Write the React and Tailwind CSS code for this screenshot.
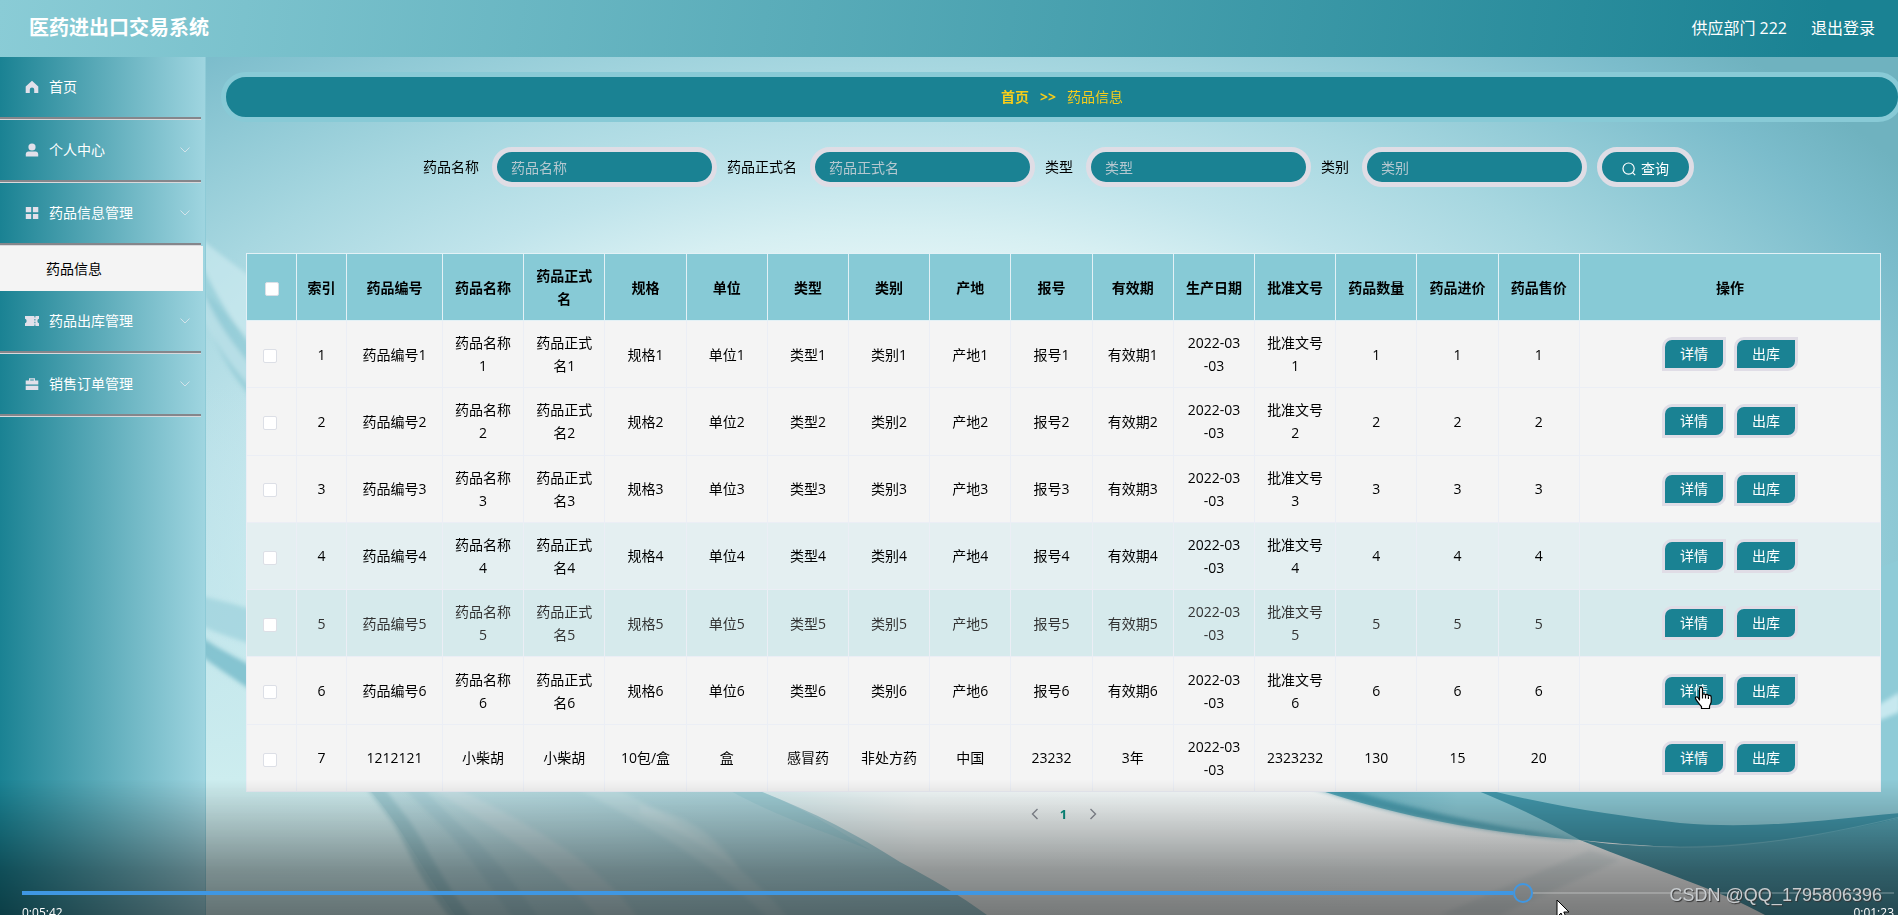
import { useState } from "react";
import clsx from "clsx";

const columns = [
  "药品编号",
  "药品名称",
  "药品正式名",
  "规格",
  "单位",
  "类型",
  "类别",
  "产地",
  "报号",
  "有效期",
  "生产日期",
  "批准文号",
  "药品数量",
  "药品进价",
  "药品售价",
];

const makeRow = (n) => [
  `药品编号${n}`,
  `药品名称${n}`,
  `药品正式名${n}`,
  `规格${n}`,
  `单位${n}`,
  `类型${n}`,
  `类别${n}`,
  `产地${n}`,
  `报号${n}`,
  `有效期${n}`,
  "2022-03\n-03",
  `批准文号${n}`,
  `${n}`,
  `${n}`,
  `${n}`,
];

const rows = [
  ...[1, 2, 3, 4, 5, 6].map(makeRow),
  [
    "1212121",
    "小柴胡",
    "小柴胡",
    "10包/盒",
    "盒",
    "感冒药",
    "非处方药",
    "中国",
    "23232",
    "3年",
    "2022-03\n-03",
    "2323232",
    "130",
    "15",
    "20",
  ],
];

const filters = ["药品名称", "药品正式名", "类型", "类别"];

const HomeIcon = () => (
  <svg width="14" height="14" viewBox="0 0 14 14" fill="currentColor">
    <path d="M7 .8 13.3 6.4V13H9.2V9.6a2.2 2.2 0 0 0-4.4 0V13H.7V6.4Z" />
  </svg>
);

const UserIcon = () => (
  <svg width="14" height="14" viewBox="0 0 14 14" fill="currentColor">
    <circle cx="7" cy="4" r="3.6" />
    <path d="M.8 13.5v-2.3c0-1.6 1.1-2.6 2.6-2.6h7.2c1.5 0 2.6 1 2.6 2.6v2.3Z" />
  </svg>
);

const GridIcon = () => (
  <svg width="14" height="14" viewBox="0 0 14 14" fill="currentColor">
    <path d="M.8 1h5.4v5.2H.8zM7.9 1h5.4v5.2H7.9zM.8 7.9h5.4v5.2H.8zM7.9 7.9h5.4v5.2H7.9z" />
  </svg>
);

const TicketIcon = () => (
  <svg width="14" height="14" viewBox="0 0 14 14" fill="currentColor">
    <path
      fillRule="evenodd"
      d="M0 2h9.4v1.6h1V2H14v2.8a2.3 2.3 0 0 0 0 4.4V12h-3.6v-1.6h-1V12H0V9.2a2.3 2.3 0 0 0 0-4.4ZM9.4 5v1.5h1V5Zm0 2.7v1.5h1V7.7Z"
    />
  </svg>
);

const BriefcaseIcon = () => (
  <svg width="14" height="14" viewBox="0 0 14 14" fill="currentColor">
    <path
      fillRule="evenodd"
      d="M4 3.6V1.2h6v2.4h3.3v4H.7v-4Zm1.2 0h3.6V2.4H5.2ZM.7 8.8h12.6V13H.7Z"
    />
  </svg>
);

const ChevronDown = () => (
  <svg
    width="12"
    height="12"
    viewBox="0 0 12 12"
    fill="none"
    stroke="currentColor"
    className="ml-auto text-[#d3e3ea]"
  >
    <path d="m1.5 3.5 4.5 4.5 4.5-4.5" />
  </svg>
);

const menu = [
  { label: "首页", icon: HomeIcon },
  { label: "个人中心", icon: UserIcon, expandable: true },
  { label: "药品信息管理", icon: GridIcon, expandable: true, children: ["药品信息"] },
  { label: "药品出库管理", icon: TicketIcon, expandable: true },
  { label: "销售订单管理", icon: BriefcaseIcon, expandable: true },
];

function Header() {
  return (
    <header className="h-[57px] pb-[2px] flex items-center justify-between pl-[29px] pr-[23px] text-white bg-[linear-gradient(98deg,#8accd6_0%,#1a8293_96%)]">
      <h1 className="text-xl font-bold">医药进出口交易系统</h1>
      <div className="flex items-center gap-6 text-base">
        <span>供应部门 222</span>
        <a href="#logout">退出登录</a>
      </div>
    </header>
  );
}

function Sidebar() {
  return (
    <aside className="w-[206px] shrink-0 border-r border-[#8ecbd7] bg-[linear-gradient(to_right,#1a8293,#9fd5e0)]">
      <nav>
        {menu.map(({ label, icon: Icon, expandable, children }) => (
          <div key={label}>
            <button
              type="button"
              className="w-[201px] h-[63px] pb-[3px] pl-[25px] pr-[10px] flex items-center text-left text-sm text-white shadow-[inset_0_-1px_0_#d9d9dc,inset_0_-3px_0_#85868b]"
            >
              <span className="w-6 text-[#e2e0ea]">
                <Icon />
              </span>
              {label}
              {expandable && <ChevronDown />}
            </button>
            {children?.map((child) => (
              <a
                key={child}
                href="#drug"
                className="w-[203px] h-[45px] pl-[46px] flex items-center text-sm text-black bg-[#f4f4f4]"
              >
                {child}
              </a>
            ))}
          </div>
        ))}
      </nav>
    </aside>
  );
}

function Backdrop() {
  return (
    <svg
      className="absolute inset-0 w-full h-full"
      viewBox="206 57 1692 858"
      preserveAspectRatio="none"
      aria-hidden="true"
    >
      <defs>
        <radialGradient
          id="glow"
          gradientUnits="userSpaceOnUse"
          cx="0"
          cy="0"
          r="1"
          gradientTransform="translate(900 560) scale(1210 704)"
        >
          <stop offset="0.36" stopColor="#ecf8f9" />
          <stop offset="0.47" stopColor="#d6eff2" />
          <stop offset="0.56" stopColor="#c0e4eb" />
          <stop offset="0.7" stopColor="#a7d7e0" />
          <stop offset="0.82" stopColor="#8fc9d5" />
          <stop offset="0.92" stopColor="#7bbccb" />
          <stop offset="1" stopColor="#6fb2bf" />
        </radialGradient>
        <linearGradient id="floor" x1="0" x2="1" y1="0" y2="0">
          <stop offset="0" stopColor="#cdedef" />
          <stop offset="0.3" stopColor="#d5eef1" />
          <stop offset="0.42" stopColor="#f4fbfb" />
          <stop offset="1" stopColor="#ffffff" />
        </linearGradient>
        <linearGradient id="haze" x1="0" x2="0" y1="0" y2="1">
          <stop offset="0" stopColor="#c3e6ed" stopOpacity="0" />
          <stop offset="1" stopColor="#cdedef" />
        </linearGradient>
        <linearGradient id="swath" x1="0" x2="1" y1="0" y2="0">
          <stop offset="0" stopColor="#bcdfe5" stopOpacity="0.8" />
          <stop offset="0.5" stopColor="#b0d8df" />
          <stop offset="1" stopColor="#a6d0d8" />
        </linearGradient>
        <linearGradient id="wave" gradientUnits="userSpaceOnUse" x1="1310" x2="1900" y1="0" y2="0">
          <stop offset="0" stopColor="#62b0c1" />
          <stop offset="0.25" stopColor="#8ccbd7" />
          <stop offset="1" stopColor="#8fcbd7" />
        </linearGradient>
        <linearGradient id="deep" gradientUnits="userSpaceOnUse" x1="0" x2="0" y1="815" y2="915">
          <stop offset="0" stopColor="#56a5b6" />
          <stop offset="1" stopColor="#4d98a9" />
        </linearGradient>
        <filter id="soft">
          <feGaussianBlur stdDeviation="2" />
        </filter>
      </defs>

      <rect x="206" y="57" width="1692" height="858" fill="url(#glow)" />
      <rect x="206" y="380" width="400" height="400" fill="url(#haze)" />
      <rect x="206" y="780" width="1692" height="135" fill="url(#floor)" />

      {/* ribbons left of the table */}
      <g filter="url(#soft)">
        <path d="M200 238C225 258 240 270 300 310V380C250 350 220 300 200 290Z" fill="#d0edf2" opacity="0.6" />
        <path d="M200 262C225 310 240 340 300 400V440C240 400 215 350 200 300Z" fill="#7cc0ce" opacity="0.5" />
        <path d="M200 285C220 330 235 350 300 420V430C240 385 215 345 200 310Z" fill="#c4e6ed" opacity="0.7" />
        <path d="M200 596C220 600 240 605 300 625V660C240 640 220 635 200 625Z" fill="#9bd0dc" opacity="0.7" />
        <path d="M200 636C220 650 240 660 300 690V720C250 690 220 670 200 655Z" fill="#74bac9" opacity="0.8" />
      </g>

      {/* lower left veil and its folds */}
      <path d="M360 780C400 820 415 860 455 915H987C960 895 930 878 900 862C850 830 800 805 735 782Z" fill="url(#swath)" />
      <g filter="url(#soft)">
        <path d="M360 780 392 822C410 850 415 875 452 920H474C440 880 425 840 405 815L378 780Z" fill="#8fc3cc" opacity="0.6" />
        <path d="M395 780 445 830C475 860 490 890 515 920H540C520 890 490 850 460 825L415 780Z" fill="#94c6d0" opacity="0.35" />
        <path d="M440 780C500 810 590 850 640 920H600C560 870 500 830 425 785Z" fill="#d3eaee" opacity="0.5" />
        <path d="M640 805C690 815 720 840 740 870C710 850 680 830 640 815Z" fill="#d3eaee" opacity="0.45" />
        <path d="M600 780C680 820 740 860 790 920H770C720 870 660 830 560 780Z" fill="#d3eaee" opacity="0.4" />
      </g>
      <path d="M735 782C790 800 830 825 870 850C820 830 770 815 715 782Z" fill="#8fc8d3" opacity="0.4" />

      {/* lower right waves */}
      <path d="M1900 560V850L1580 840C1500 834 1400 820 1290 780Z" fill="url(#wave)" />
      <path
        d="M1290 780C1400 820 1500 834 1580 840C1520 830 1420 814 1320 780Z"
        fill="#2f8ba0"
        opacity="0.6"
        filter="url(#soft)"
      />
      <path d="M1450 780C1540 805 1610 815 1680 823C1760 830 1830 819 1900 813V818C1830 838 1760 850 1680 847C1640 846 1600 842 1580 840Q1520 806 1450 780Z" fill="#439aae" />
      <path d="M1580 840C1640 850 1760 852 1900 818V915H1765C1720 890 1660 872 1580 840Z" fill="url(#deep)" />
      <path d="M1620 844C1700 852 1780 846 1900 817" stroke="#9ed3de" strokeOpacity="0.35" fill="none" />
      <path d="M1590 850 1440 915H1500L1620 860Z" fill="#b9cdd2" opacity="0.25" filter="url(#soft)" />
      <path d="M1860 716 1900 692V712L1860 728Z" fill="#d6f0f5" opacity="0.8" filter="url(#soft)" />
    </svg>
  );
}

function SearchBar() {
  return (
    <form
      className="flex justify-center items-center gap-[10px] pr-[10px] text-sm"
      onSubmit={(e) => e.preventDefault()}
    >
      {filters.map((name) => (
        <label key={name} className="flex items-center gap-[13px] text-black">
          {name}
          <input
            type="text"
            placeholder={name}
            className="w-[225px] h-10 px-[14px] rounded-[20px] border-[5px] border-[#dfdde5] bg-[#1a8293] text-white placeholder:text-[#b5c8d0] outline-none"
          />
        </label>
      ))}
      <button
        type="submit"
        className="w-[97px] h-10 pt-1 rounded-[20px] border-[5px] border-[#dfdde5] bg-[#1a8293] text-white flex items-center justify-center gap-[5px]"
      >
        <svg width="14" height="14" viewBox="0 0 14 14" fill="none" stroke="currentColor" strokeWidth="1.2">
          <circle cx="6.6" cy="6.6" r="5.6" />
          <path d="m10.6 10.6 2.6 2.6" />
        </svg>
        查询
      </button>
    </form>
  );
}

function Checkbox({ label, checked, onChange }) {
  return (
    <input
      type="checkbox"
      aria-label={label}
      checked={checked}
      onChange={onChange}
      className="appearance-none align-middle w-[14px] h-[14px] rounded-[2px] border border-[#dcdfe6] bg-white checked:bg-[#1a8293]"
    />
  );
}

function ActionButton({ children }) {
  return (
    <button
      type="button"
      className="w-16 h-[34px] rounded-tl-[10px] rounded-br-[10px] border-[3px] border-[#e0dde6] bg-[#1a8293] text-sm text-white"
    >
      {children}
    </button>
  );
}

function HandCursor() {
  return (
    <svg
      width="19"
      height="24"
      viewBox="0 0 19 24"
      className="absolute left-8 top-3 pointer-events-none"
      fill="#fff"
      stroke="#000"
      strokeWidth="1.2"
      strokeLinejoin="round"
    >
      <path d="M5.5 14V3c0-2.4 3-2.4 3 0v6c.2-1.6 2.8-1.5 3 .3.4-1.3 2.7-1.2 2.9.6.6-1 2.8-.8 2.8 1.2v4.4c0 2.2-1.4 3.3-1.7 5v2H7.5v-1.8C6 18.5 3 15.5 1.6 12.9c-.8-1.7 1-2.7 2.3-1.4Z" />
      <path d="M8.5 9v3.5M11.5 9.5v3M14.4 10.5V13" fill="none" />
    </svg>
  );
}

function DrugTable() {
  const [selected, setSelected] = useState([]);

  const toggle = (i) =>
    setSelected((prev) =>
      prev.includes(i) ? prev.filter((x) => x !== i) : [...prev, i]
    );

  const toggleAll = () =>
    setSelected((prev) => (prev.length === rows.length ? [] : rows.map((_, i) => i)));

  return (
    <table className="w-full h-[539px] table-fixed border-collapse text-sm leading-[23px] text-center text-black">
      <colgroup>
        <col className="w-[50px]" />
        <col className="w-[50px]" />
        <col className="w-24" />
        {columns.slice(1).map((c) => (
          <col key={c} />
        ))}
        <col className="w-[301px]" />
      </colgroup>
      <thead>
        <tr className="h-[67px] bg-[#87cad6]">
          <th className="border border-[#e3f1f6]">
            <Checkbox
              label="全选"
              checked={selected.length === rows.length}
              onChange={toggleAll}
            />
          </th>
          <th className="border border-[#e3f1f6] font-bold">索引</th>
          {columns.map((c) => (
            <th key={c} className="px-[10px] border border-[#e3f1f6] font-bold break-all">
              {c}
            </th>
          ))}
          <th className="border border-[#e3f1f6] font-bold">操作</th>
        </tr>
      </thead>
      <tbody>
        {rows.map((row, i) => (
          <tr
            key={i}
            className={clsx(
              "h-[67px]",
              i === 3 && "bg-[#e4eff1]",
              i === 4 && "bg-[#d6eaec] text-[#333]",
              i !== 3 && i !== 4 && "bg-[#f4f4f4]"
            )}
          >
            <td className="pr-1 border border-[#ebeef5]">
              <Checkbox
                label={`选择${i + 1}`}
                checked={selected.includes(i)}
                onChange={() => toggle(i)}
              />
            </td>
            <td className="border border-[#ebeef5]">{i + 1}</td>
            {row.map((cell, j) => (
              <td
                key={j}
                className="px-[9px] border border-[#ebeef5] break-all whitespace-pre-line"
              >
                {cell}
              </td>
            ))}
            <td className="border border-[#ebeef5]">
              <div className="flex justify-center gap-2">
                <div className="relative">
                  <ActionButton>详情</ActionButton>
                  {i === 5 && <HandCursor />}
                </div>
                <ActionButton>出库</ActionButton>
              </div>
            </td>
          </tr>
        ))}
      </tbody>
    </table>
  );
}

function Pagination() {
  return (
    <div className="flex justify-center items-center gap-[18px] text-[#8b8f98]">
      <button type="button" aria-label="上一页">
        <svg width="12" height="12" viewBox="0 0 12 12" fill="none" stroke="currentColor" strokeWidth="1.4">
          <path d="M8.5 1 3.5 6l5 5" />
        </svg>
      </button>
      <button type="button" className="w-[10px] text-[13px] leading-5 font-bold text-[#0a9384]">
        1
      </button>
      <button type="button" aria-label="下一页">
        <svg width="12" height="12" viewBox="0 0 12 12" fill="none" stroke="currentColor" strokeWidth="1.4">
          <path d="m3.5 1 5 5-5 5" />
        </svg>
      </button>
    </div>
  );
}

function Player() {
  const [position, setPosition] = useState(80.5);

  return (
    <div className="absolute inset-x-0 bottom-0 h-[135px] overflow-hidden bg-[linear-gradient(to_bottom,rgba(0,0,0,0),rgba(0,0,0,0.22)_37%,rgba(0,0,0,0.4)_67%,rgba(0,0,0,0.52))]">
      <div className="relative mt-[103px] ml-[22px] mr-1 h-5 flex items-center">
        <div
          className="h-1 bg-[#3f97e3] shrink-0"
          style={{ width: `calc((100% - 20px) * ${position / 100})` }}
        />
        <div className="w-5 shrink-0" />
        <div className="h-[2px] flex-1 bg-white/20" />
        <input
          type="range"
          aria-label="播放进度"
          min="0"
          max="100"
          step="0.1"
          value={position}
          onChange={(e) => setPosition(Number(e.target.value))}
          className="absolute inset-0 w-full h-5 appearance-none bg-transparent [&::-webkit-slider-thumb]:appearance-none [&::-webkit-slider-thumb]:w-5 [&::-webkit-slider-thumb]:h-5 [&::-webkit-slider-thumb]:rounded-full [&::-webkit-slider-thumb]:border-2 [&::-webkit-slider-thumb]:border-solid [&::-webkit-slider-thumb]:border-[#3f97e3]"
        />
      </div>
      <div className="mt-[2px] ml-[22px] mr-1 flex justify-between text-xs text-white">
        <span>0:05:42</span>
        <span>0:01:23</span>
      </div>
      <span className="absolute right-4 top-[101px] text-lg leading-7 font-['Liberation_Sans',sans-serif] text-[#c9cdd0] [text-shadow:1px_1px_1px_#333]">
        CSDN @QQ_1795806396
      </span>
      <svg
        width="14"
        height="22"
        viewBox="0 0 14 22"
        className="absolute left-[82%] top-[119px] pointer-events-none"
        fill="#fff"
        stroke="#000"
      >
        <path d="M1 1v17l4-4 3 6.5 2.6-1.2L7.8 13H13Z" />
      </svg>
    </div>
  );
}

export default function App() {
  return (
    <div className="relative min-h-screen flex flex-col overflow-hidden font-['Open_Sans','Noto_Sans_CJK_SC',sans-serif]">
      <Header />
      <div className="flex-1 flex">
        <Sidebar />
        <main className="relative flex-1 min-w-0">
          <Backdrop />
          <div className="relative pt-[15px]">
            <div className="ml-[15px] -mr-[5px] h-[50px] rounded-[25px] border-[5px] border-[#88cad6] bg-[#1a8293] flex items-center justify-center gap-[11px] text-sm text-[#f7cd1b]">
              <a href="#home" className="font-bold">
                首页
              </a>
              <span className="font-bold">&gt;&gt;</span>
              <span>药品信息</span>
            </div>
            <div className="pl-10 pr-[17px] pt-[25px]">
              <SearchBar />
              <div className="mt-[66px]">
                <DrugTable />
              </div>
              <div className="mt-3">
                <Pagination />
              </div>
            </div>
          </div>
        </main>
      </div>
      <Player />
    </div>
  );
}
